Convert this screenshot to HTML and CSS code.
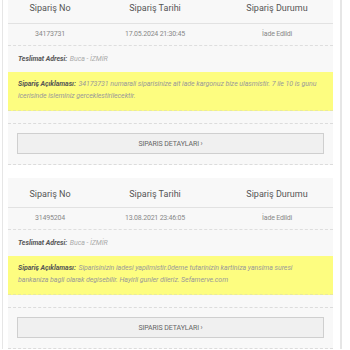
FILE: index.html
```html
<!DOCTYPE html>
<html>
<head>
<meta charset="utf-8">
<link rel="stylesheet" href="styles.css">
</head>
<body>
<div class="wrap">
  <div class="card first">
    <div class="row head">
      <div>Sipariş No</div><div>Sipariş Tarihi</div><div>Sipariş Durumu</div>
    </div>
    <div class="row data">
      <div>34173731</div><div>17.05.2024 21:30:45</div><div>İade Edildi</div>
    </div>
    <div class="addr"><b>Teslimat Adresi:</b> Buca - İZMİR</div>
    <div class="note"><b>Sipariş Açıklaması:</b> 34173731 numarali siparisinize ait iade kargonuz bize ulasmistir. 7 ile 10 is gunu icerisinde isleminiz gerceklestirilecektir.</div>
    <div class="spacer"></div>
    <div class="btnwrap"><div class="btn">SIPARIS DETAYLARI ›</div></div>
  </div>
  <div class="card">
    <div class="row head">
      <div>Sipariş No</div><div>Sipariş Tarihi</div><div>Sipariş Durumu</div>
    </div>
    <div class="row data">
      <div>31495204</div><div>13.08.2021 23:46:05</div><div>İade Edildi</div>
    </div>
    <div class="addr"><b>Teslimat Adresi:</b> Buca - İZMİR</div>
    <div class="note"><b>Sipariş Açıklaması:</b> Siparisinizin iadesi yapilmistir.0deme tutarinizin kartiniza yansima suresi bankaniza bagli olarak degisebilir. Hayirli gunler dileriz. Sefamerve.com</div>
    <div class="spacer"></div>
    <div class="btnwrap"><div class="btn">SIPARIS DETAYLARI ›</div></div>
  </div>
</div>
</body>
</html>
```
FILE: styles.css
```css
html, body {
  margin: 0;
  padding: 0;
  background: #fff;
  overflow: hidden;
}
body {
  font-family: "Roboto", "Liberation Sans", sans-serif;
  color: #777;
}
.wrap {
  margin: -6px 0 0 2px;
  width: 340px;
  box-sizing: border-box;
  border-left: 1px solid #e6e6e6;
  border-right: 2px solid #e6e6e6;
  padding: 0 7px 0 5px;
}
.card {
  background: #f8f8f8;
  border-bottom: 1px dashed #dcdcdc;
  margin-bottom: 13px;
}
.row {
  display: grid;
  grid-template-columns: 84px 126px 118px;
  text-align: center;
}
.head {
  height: 30px;
  line-height: 30px;
  font-size: 9px;
  font-weight: 400;
  color: #555;
  border-bottom: 1px solid #e2e2e2;
  padding-top: 1px;
  box-sizing: border-box;
}
.first .head {
  line-height: 27px;
}
.data {
  height: 21px;
  line-height: 21px;
  font-size: 7px;
  letter-spacing: -0.2px;
  color: #888;
  border-bottom: 1px dashed #dedede;
}
.addr {
  height: 26px;
  line-height: 26px;
  padding-left: 10px;
  font-size: 7px;
  letter-spacing: -0.05px;
  font-style: italic;
  color: #aaa;
}
.addr b, .note b {
  color: #555;
  font-weight: 700;
  padding-right: 1px;
}
.note {
  background: #fdfd80;
  padding: 7px 10px 8px 10px;
  font-size: 7px;
  letter-spacing: -0.05px;
  line-height: 11.5px;
  font-style: italic;
  color: #999;
  border-bottom: 1px dashed #e8e8a0;
}
.spacer {
  height: 12px;
  border-bottom: 1px dashed #dcdcdc;
}
.btnwrap {
  padding: 9px 9px 10px 9px;
}
.btn {
  height: 21px;
  line-height: 21px;
  box-sizing: border-box;
  border: 1px solid #cfcfcf;
  background: #f0f0f0;
  text-align: center;
  font-size: 7px;
  font-weight: 400;
  letter-spacing: -0.1px;
  color: #666;
}
```
